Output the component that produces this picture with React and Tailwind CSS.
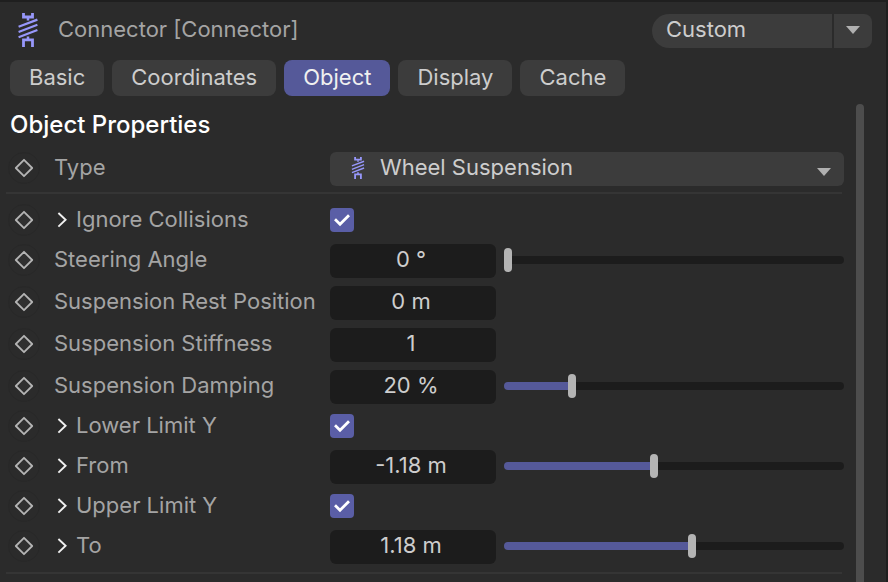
import { useState } from 'react';

const TABS = ['Basic', 'Coordinates', 'Object', 'Display', 'Cache'];

const PROPERTIES = [
  { id: 'ignore_collisions', label: 'Ignore Collisions', type: 'check', expandable: true },
  { id: 'steering_angle', label: 'Steering Angle', type: 'value', value: '0 °', slider: 0 },
  { id: 'rest_position', label: 'Suspension Rest Position', type: 'value', value: '0 m' },
  { id: 'stiffness', label: 'Suspension Stiffness', type: 'value', value: '1' },
  { id: 'damping', label: 'Suspension Damping', type: 'value', value: '20 %', slider: 19.3 },
  { id: 'lower_limit', label: 'Lower Limit Y', type: 'check', expandable: true },
  { id: 'from', label: 'From', type: 'value', value: '-1.18 m', slider: 44, expandable: true },
  { id: 'upper_limit', label: 'Upper Limit Y', type: 'check', expandable: true },
  { id: 'to', label: 'To', type: 'value', value: '1.18 m', slider: 55.4, expandable: true }
];

const SpringIcon = ({ className }) => (
  <svg viewBox="0 0 20 34" fill="none" stroke="#9797fa" className={className} aria-hidden="true">
    <path d="M5.5 0v4h9V0" strokeWidth="2.8" />
    <path d="M10 5v2.5M10 23.5v3" strokeWidth="2.5" />
    <path d="M.6 13.8L19.4 6.6M.6 19L19.4 11.8M.6 24.2L19.4 17" strokeWidth="2.2" />
    <path d="M5.5 34v-7.2h9V34" strokeWidth="2.8" />
  </svg>
);

const Triangle = ({ className }) => (
  <svg viewBox="0 0 14 8" fill="#b0b0b0" className={className} aria-hidden="true">
    <path d="M0 0h14L7 8z" />
  </svg>
);

const Keyframe = ({ label }) => (
  <button type="button" aria-label={`Animate ${label}`} className="-my-0.5 size-8 shrink-0 rounded-full">
    <svg viewBox="0 0 32 32" fill="none" className="size-8">
      <circle cx="16" cy="16" r="15.5" stroke="#282828" />
      <path d="M16 7.8L24.2 16 16 24.2 7.8 16z" fill="#303030" stroke="#b4b4b4" strokeWidth="1.8" strokeLinejoin="round" />
    </svg>
  </button>
);

const Chevron = ({ label }) => (
  <button type="button" aria-label={`Expand ${label}`} className="ml-0.5 mr-2 shrink-0">
    <svg viewBox="0 0 12 16" fill="none" stroke="#f0f0f0" strokeWidth="1.9" className="h-4 w-3">
      <path d="M2.4 1l7.2 6.8-7.2 6.8" />
    </svg>
  </button>
);

const CheckBox = ({ id }) => (
  <span className="grid">
    <input
      id={id}
      type="checkbox"
      defaultChecked
      className="peer col-start-1 row-start-1 size-6 appearance-none rounded bg-[#3c3c3c] checked:bg-[#5a5ea6]"
    />
    <svg
      viewBox="0 0 24 24"
      fill="none"
      stroke="#ffffff"
      strokeWidth="2.8"
      className="pointer-events-none invisible col-start-1 row-start-1 size-6 peer-checked:visible"
    >
      <path d="M5 11.3l5 4.9 9-9" />
    </svg>
  </span>
);

const Slider = ({ label, initial }) => {
  const [position, setPosition] = useState(initial);

  return (
    <input
      type="range"
      step="0.1"
      aria-label={`${label} slider`}
      value={position}
      onChange={(e) => setPosition(Number(e.target.value))}
      className="ml-2 h-2 min-w-0 flex-1 appearance-none rounded-full
        [&::-webkit-slider-thumb]:h-6 [&::-webkit-slider-thumb]:w-2 [&::-webkit-slider-thumb]:appearance-none
        [&::-webkit-slider-thumb]:rounded-full [&::-webkit-slider-thumb]:bg-[#b4b4b4]"
      style={{ background: `linear-gradient(to right, #555999 ${position}%, #1c1c1c ${position}%)` }}
    />
  );
};

const Row = ({ id, label, expandable, height, children }) => (
  <div className={`flex items-center pb-0.5 pl-2 ${height}`}>
    <Keyframe label={label} />
    <div className="ml-3.5 flex w-[276px] shrink-0 items-center">
      {expandable && <Chevron label={label} />}
      <label htmlFor={id} className="whitespace-nowrap pb-0.5 leading-6 text-[#a4a4a4]">{label}</label>
    </div>
    {children}
  </div>
);

const App = () => {
  const [tab, setTab] = useState('Object');

  return (
    <div className="flex h-screen flex-col overflow-hidden border-r-2 border-t-2 border-[#1f1f1f] bg-[#2b2b2b] font-['Inter',sans-serif] text-[22px] font-[430] text-[#cdcdcd]">
      {/* Header */}
      <header className="flex items-center pl-[18px] pr-3.5 pt-3">
        <SpringIcon className="-mt-0.5 h-[34px] w-5" />
        <h1 className="ml-5 flex-1 pb-1 leading-6 text-[#a4a4a4]">Connector [Connector]</h1>
        <button type="button" className="h-[34px] w-[180px] rounded-l-full bg-[#3c3c3c] pb-1 pl-3.5 text-left leading-6">
          Custom
        </button>
        <button
          type="button"
          aria-label="Choose preset"
          className="ml-0.5 flex h-[34px] w-[38px] items-center justify-center rounded-r-lg bg-[#3c3c3c] pb-0.5"
        >
          <Triangle className="h-2 w-3.5" />
        </button>
      </header>

      {/* Tabs */}
      <nav className="mt-3 flex gap-2 pl-2.5">
        {TABS.map((name) => (
          <button
            key={name}
            type="button"
            onClick={() => setTab(name)}
            className={`h-9 rounded-lg px-[19px] pb-0.5 leading-6 ${
              tab === name ? 'bg-[#555999] text-[#f0f0f0]' : 'bg-[#3c3c3c]'
            }`}
          >
            {name}
          </button>
        ))}
      </nav>

      <div className="mt-2 flex min-h-0 flex-1 pr-[22px]">
        <main className="min-w-0 flex-1 pr-3">
          <h2 className="pl-2.5 text-2xl font-medium leading-[42px] text-white">Object Properties</h2>

          <div className="mt-1.5">
            <Row id="type" label="Type" height="h-[34px]">
              <div className="-mb-0.5 grid min-w-0 flex-1 items-center">
                <select
                  id="type"
                  className="col-start-1 row-start-1 h-[34px] w-full appearance-none rounded-md bg-[#3c3c3c] pb-1 pl-[50px] leading-6"
                >
                  <option>Wheel Suspension</option>
                </select>
                <SpringIcon className="pointer-events-none col-start-1 row-start-1 -mt-0.5 ml-5 h-[22px] w-4" />
                <Triangle className="pointer-events-none col-start-1 row-start-1 mr-3 mt-1.5 h-2 w-4 justify-self-end" />
              </div>
            </Row>
          </div>

          <hr className="ml-1.5 mr-0.5 mt-1.5 border-t-2 border-[#353535]" />

          <div className="mt-3 flex flex-col gap-2">
            {PROPERTIES.map((prop) => (
              <Row
                key={prop.id}
                id={prop.id}
                label={prop.label}
                expandable={prop.expandable}
                height={prop.type === 'check' ? 'h-[30px]' : 'h-[34px]'}
              >
                {prop.type === 'check' ? (
                  <CheckBox id={prop.id} />
                ) : (
                  <input
                    id={prop.id}
                    type="text"
                    defaultValue={prop.value}
                    className="-mb-0.5 h-[34px] w-[166px] shrink-0 rounded-md bg-[#1c1c1c] pb-1 pl-2 pr-3 text-center"
                  />
                )}
                {prop.slider !== undefined && <Slider label={prop.label} initial={prop.slider} />}
              </Row>
            ))}
          </div>

          <hr className="ml-1.5 mr-0.5 mt-2 border-t-2 border-[#353535]" />
        </main>

        {/* Scrollbar */}
        <div className="w-2 shrink-0 rounded-t-full bg-[#4d4d4d]" />
      </div>
    </div>
  );
};

export default App;
